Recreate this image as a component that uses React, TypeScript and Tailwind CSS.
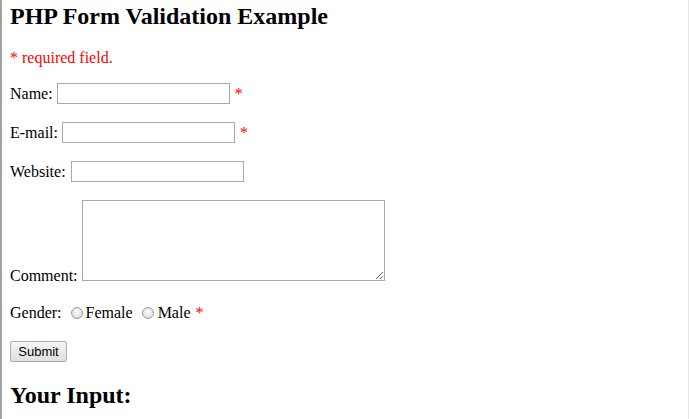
const serif = "font-['Liberation_Serif','Times_New_Roman',serif]";

function TextInput({ className = "ml-[4px]" }: { className?: string }) {
  return (
    <input
      type="text"
      className={`h-[21px] w-[173px] border border-[#a9a9a9] bg-white px-[2px] text-[13px] outline-none ${className}`}
    />
  );
}

function Star({ className = "ml-[5px]" }: { className?: string }) {
  return <span className={`${className} text-[#ff0000]`}>*</span>;
}

function Radio({ className = "" }: { className?: string }) {
  return (
    <span
      className={`inline-block h-[12px] w-[12px] shrink-0 rounded-full border border-[#9c9c9c] bg-[radial-gradient(circle_at_50%_40%,#fafafa_0%,#e6e6e6_55%,#cfcfcf_100%)] ${className}`}
    />
  );
}

export default function App() {
  return (
    <div className="h-[419px] w-[689px] overflow-hidden bg-white">
      <div
        className={`h-full w-full border-l-[2px] border-r border-l-[#a3a3a3] border-r-[#e6e6e6] pl-[8px] ${serif} text-[16px] leading-[18px] text-black`}
      >
        <h2 className="pt-[2px] text-[24px] font-bold leading-[28px]">PHP Form Validation Example</h2>

        <p className="mt-[19px] text-[#ff0000]">* required field.</p>

        <form onSubmit={(e) => e.preventDefault()}>
          <div className="mt-[16px] flex h-[21px] items-center">
            <span>Name:</span>
            <TextInput />
            <Star />
          </div>

          <div className="mt-[18px] flex h-[21px] items-center">
            <span>E-mail:</span>
            <TextInput />
            <Star />
          </div>

          <div className="mt-[18px] flex h-[21px] items-center">
            <span>Website:</span>
            <TextInput className="ml-[5px]" />
          </div>

          <div className="mt-[18px] flex items-end">
            <span className="-mb-[4px]">Comment:</span>
            <textarea className="ml-[4px] block h-[81px] w-[303px] border border-[#a9a9a9] bg-white outline-none" />
          </div>

          <div className="mt-[23px] flex h-[18px] items-center">
            <span>Gender:</span>
            <Radio className="ml-[9px]" />
            <span className="ml-[3px]">Female</span>
            <Radio className="ml-[9px]" />
            <span className="ml-[4px]">Male</span>
            <Star className="ml-[5px]" />
          </div>

          <button
            type="submit"
            className="mt-[19px] block h-[21px] w-[57px] rounded-[2px] border border-[#adadad] bg-[linear-gradient(#f6f6f6,#dedede)] font-['Liberation_Sans',Arial,sans-serif] text-[13px] leading-[19px] text-black"
          >
            Submit
          </button>
        </form>

        <h2 className="mt-[19px] text-[24px] font-bold leading-[28px]">Your Input:</h2>
      </div>
    </div>
  );
}
